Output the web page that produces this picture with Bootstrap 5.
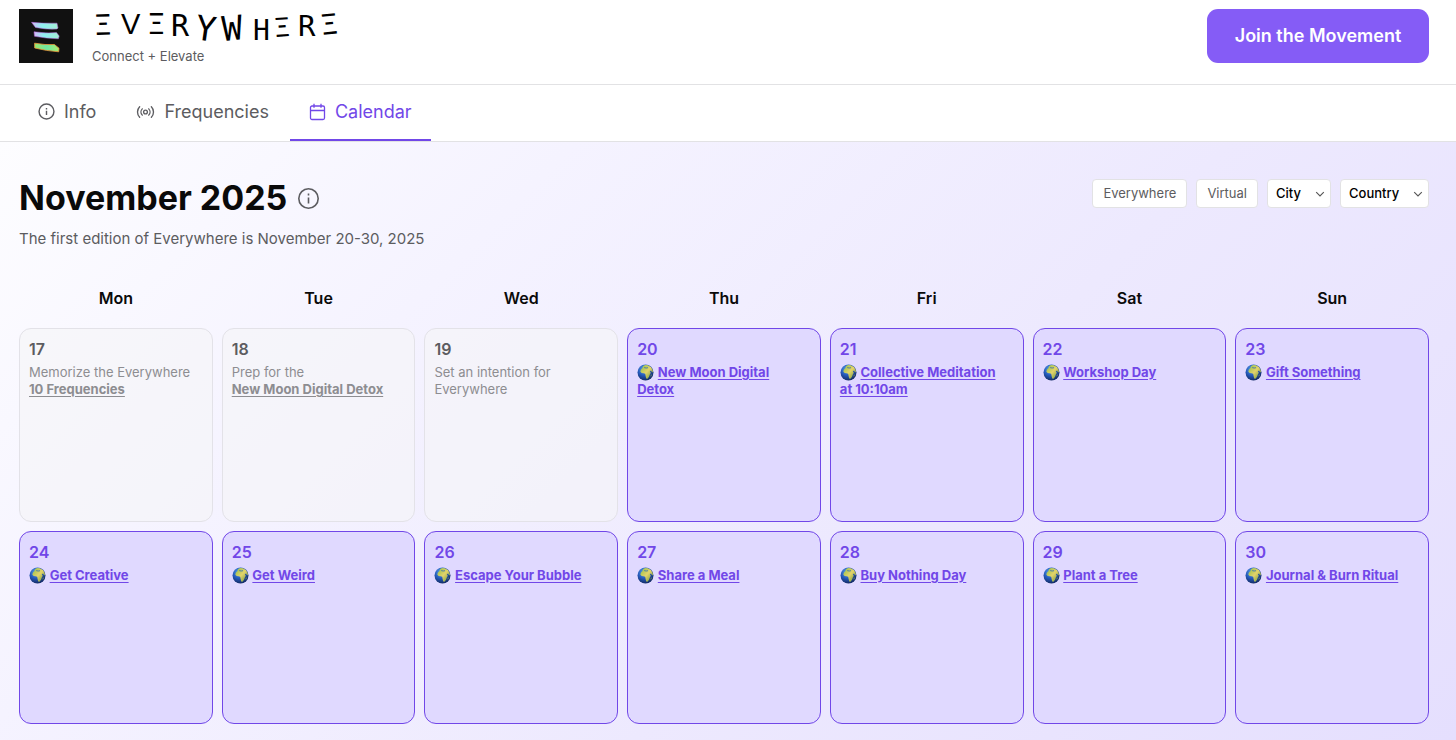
<!DOCTYPE html>
<html lang="en">
<head>
<meta charset="utf-8">
<meta name="viewport" content="width=device-width, initial-scale=1">
<title>Everywhere – Calendar</title>
<link href="https://cdn.jsdelivr.net/npm/bootstrap@5.3.0/dist/css/bootstrap.min.css" rel="stylesheet">
<style>
  :root { --brand: #7147e8; --ink: #0a0a0a; --muted: #5c5c60; --line: #e2e2e4; }
  body { font-family: Inter, "Liberation Sans", sans-serif; color: var(--ink); background: #fff; min-height: 100vh; }
  .gutter { padding-left: 19px; padding-right: 27px; }
  .top-bar { height: 85px; padding-top: 9px; border-bottom: 1px solid var(--line); }
  .brand { gap: 16px; }
  .wordmark { overflow: visible; }
  .tagline { font-size: 13px; line-height: 16px; color: var(--muted); margin: 0 0 0 3px; }
  .btn-join { width: 222px; height: 54px; padding: 4px 12px 6px; border: 0; border-radius: 11px; background: #855cf6; color: #fff; font-size: 18px; font-weight: 600; }
  .btn-join:hover { background: #7147e8; color: #fff; }
  .tab-bar { height: 57px; gap: 2px; border-bottom: 1px solid var(--line); }
  .tab-bar .nav-link { height: 56px; padding: 0 19px 1px; gap: 9px; color: var(--muted); font-size: 18px; border-radius: 0; border-bottom: 2px solid transparent; }
  .tab-bar .nav-link.active { color: var(--brand); border-bottom-color: var(--brand); }
  .page { background: linear-gradient(135deg, #fdfdff 0%, #f5f3ff 28%, #ede9fe 60%, #e5dffe 100%); min-height: calc(100vh - 142px); padding-top: 35px; padding-bottom: 16px; }
  h1 { font-size: 34px; line-height: 42px; font-weight: 700; margin: 0; }
  .month { gap: 10px; }
  .edition { font-size: 15px; line-height: 24px; color: var(--muted); margin: 8px 0 0; }
  .filters { gap: 9px; padding-top: 2px; }
  .pill { height: 29px; border: 1px solid var(--line); border-radius: 4px; background: #fff; font-size: 13px; line-height: 16px; color: var(--muted); padding: 0 10px 2px; }
  select.pill { appearance: none; color: #000; font-weight: 500; width: 100%; padding-left: 8px; }
  .pick { position: relative; }
  .pick svg { position: absolute; right: 6px; top: 10px; pointer-events: none; }
  .pick-city { width: 64px; }
  .pick-country { width: 89px; }
  .week-grid { display: grid; grid-template-columns: repeat(7, minmax(0, 1fr)); gap: 9px; }
  .weekdays { margin-top: 35px; margin-bottom: 18px; font-size: 16px; line-height: 24px; font-weight: 600; text-align: center; }
  .day { aspect-ratio: 1; border: 1px solid #7147e8; border-radius: 12px; background: #e0d9ff; padding: 9px 16px 9px 9px; font-size: 13px; line-height: 17px; color: var(--brand); overflow: hidden; }
  .day h2 { font-size: 16px; line-height: 22px; font-weight: 600; margin: 0 0 4px; }
  .day p { margin: 0; }
  .day a { color: inherit; font-weight: 700; text-underline-offset: 2px; }
  .day.past { background: #f5f5f799; border-color: #e3e2e8; color: #8d8d91; }
  .day.past h2 { color: #5c5c60; }
  .globe { width: 17px; height: 17px; vertical-align: -4px; }
</style>
</head>
<body>
<svg width="0" height="0" class="position-absolute" aria-hidden="true">
  <defs>
    <radialGradient id="sea" cx=".4" cy=".3" r=".7"><stop offset="0" stop-color="#5ba6ee"/><stop offset=".55" stop-color="#2458b8"/><stop offset="1" stop-color="#142c66"/></radialGradient>
    <linearGradient id="land" x1="0" y1="0" x2="1" y2="1"><stop offset="0" stop-color="#8fbf4a"/><stop offset=".5" stop-color="#e3d36a"/><stop offset="1" stop-color="#5f9138"/></linearGradient>
  </defs>
  <symbol id="globe" viewBox="0 0 17 17">
    <circle cx="8.5" cy="8.5" r="8" fill="url(#sea)"/>
    <path d="M6 2.2 8 1l3 .2 2.8 1.8 1.7 2.6.5 3-1.4-.8-.5-1.2-1.3.6 1 1.6-1 1.6-.8 2.3-1.5 2.1-1.3-.3-.6-2.6-.4-2.2-1.6-.4-2-.3L3.300 7.400l.7-2 1.300-1.100z" fill="url(#land)"/>
    <path d="m7.200 3.600 2 .4 1.800-.3" fill="none" stroke="#2d68b8" stroke-width=".8"/>
    <path d="m14 10.500.6.200-.4 1.600-.6.200z" fill="#a9b84e"/>
  </symbol>
  <symbol id="info" viewBox="0 0 24 24"><g fill="none" stroke="currentColor" stroke-width="2"><circle cx="12" cy="12" r="10.500"/><path d="M12 11v6M12 7v2"/></g></symbol>
  <symbol id="chev" viewBox="0 0 10 10"><path d="M1.200 3.200 5 7l3.800-3.800" fill="none" stroke="#555" stroke-width="1.100"/></symbol>
</svg>

<header class="top-bar gutter d-flex justify-content-between align-items-start">
  <div class="brand d-flex">
    <svg width="54" height="54" viewBox="0 0 54 54" role="img" aria-label="Everywhere logo">
      <defs>
        <linearGradient id="b1"><stop offset="0" stop-color="#d5b8f5"/><stop offset=".4" stop-color="#8ff0f2"/><stop offset="1" stop-color="#a4ecd4"/></linearGradient>
        <linearGradient id="b3"><stop offset="0" stop-color="#9be86e"/><stop offset=".5" stop-color="#6fe7a0"/><stop offset="1" stop-color="#a8ed70"/></linearGradient>
      </defs>
      <rect width="54" height="54" fill="#111"/>
      <path d="M12.500 13.300q12 1.200 25.500.9l1 4.800-1 1q-11 .6-21.500-1.500z" fill="url(#b1)" stroke="#bb62dd" stroke-width=".5"/>
      <path d="M15 22.800q12 1.800 22.500.8l2.700 3.400-.8 2.800q-12-.3-23.900-2.500z" fill="url(#b1)" stroke="#bb62dd" stroke-width=".5"/>
      <path d="M15.600 34.200q11 2 19.800 1.300l4.600 3.700-.3 3.600q-12-.8-24-3.800z" fill="url(#b3)" stroke="#ee9b3b" stroke-width=".8"/>
    </svg>
    <div>
      <svg width="264" height="39" viewBox="0 0 264 39" class="wordmark d-block" role="img" aria-label="Everywhere" font-family="DejaVu Sans Mono, monospace" font-size="28" fill="#000">
        <text x="6" y="26" rotate="-2">Ξ</text>
        <text x="32" y="25" font-size="29" font-family="Liberation Sans, sans-serif">V</text>
        <text x="59" y="25">Ξ</text>
        <text x="82" y="27" font-size="30">R</text>
        <text x="105" y="30" font-size="34" rotate="8">Y</text>
        <text x="134" y="32" font-size="34" rotate="-5">W</text>
        <text x="164" y="31">H</text>
        <text x="186" y="28" font-size="26" rotate="-4">Ξ</text>
        <text x="209" y="27" font-size="29">R</text>
        <text x="233" y="26" rotate="-6">Ξ</text>
      </svg>
      <p class="tagline">Connect + Elevate</p>
    </div>
  </div>
  <button type="button" class="btn btn-join">Join the Movement</button>
</header>

<nav class="tab-bar gutter nav flex-nowrap">
  <a class="nav-link d-flex align-items-center" href="#info-tab"><svg width="17" height="17"><use href="#info"/></svg>Info</a>
  <a class="nav-link d-flex align-items-center" href="#frequencies"><svg width="19" height="18" viewBox="0 0 24 24" fill="none" stroke="currentColor" stroke-width="1.800" stroke-linecap="round"><circle cx="12" cy="12" r="2.500"/><path d="M7.700 16.200a6 6 0 0 1 0-8.400M16.300 7.800a6 6 0 0 1 0 8.400M4.200 19a10 10 0 0 1 0-14M19.800 5a10 10 0 0 1 0 14"/></svg>Frequencies</a>
  <a class="nav-link active d-flex align-items-center" href="#calendar" aria-current="page"><svg width="17" height="18" viewBox="0 0 17 18" fill="none" stroke="currentColor" stroke-width="1.300"><rect x="1.500" y="3" width="14" height="13.500" rx="1.500"/><path d="M1.500 7.500h14M5 .8v4M12 .8v4"/></svg>Calendar</a>
</nav>

<main class="page gutter" id="calendar">
  <div class="d-flex justify-content-between align-items-start">
    <div>
      <div class="month d-flex align-items-center">
        <h1>November 2025</h1>
        <svg width="23" height="23" viewBox="0 0 23 23" fill="none" stroke="#5c5c60" stroke-width="1.600" role="img" aria-label="About"><circle cx="11.500" cy="11.500" r="9.700"/><path d="M11.500 10.500v6M11.500 6.500v2"/></svg>
      </div>
      <p class="edition">The first edition of Everywhere is November 20-30, 2025</p>
    </div>
    <div class="filters d-flex">
      <button type="button" class="pill">Everywhere</button>
      <button type="button" class="pill">Virtual</button>
      <div class="pick pick-city"><select class="pill" aria-label="City"><option>City</option></select><svg width="10" height="10"><use href="#chev"/></svg></div>
      <div class="pick pick-country"><select class="pill" aria-label="Country"><option>Country</option></select><svg width="10" height="10"><use href="#chev"/></svg></div>
    </div>
  </div>

  <div class="week-grid weekdays"><div>Mon</div><div>Tue</div><div>Wed</div><div>Thu</div><div>Fri</div><div>Sat</div><div>Sun</div></div>

  <div class="week-grid">
    <section class="day past"><h2>17</h2><p>Memorize the Everywhere<br><a href="#d17">10 Frequencies</a></p></section>
    <section class="day past"><h2>18</h2><p>Prep for the<br><a href="#d18">New Moon Digital Detox</a></p></section>
    <section class="day past"><h2>19</h2><p>Set an intention for Everywhere</p></section>
    <section class="day"><h2>20</h2><p><svg class="globe"><use href="#globe"/></svg> <a href="#d20">New Moon Digital Detox</a></p></section>
    <section class="day"><h2>21</h2><p><svg class="globe"><use href="#globe"/></svg> <a href="#d21">Collective Meditation at 10:10am</a></p></section>
    <section class="day"><h2>22</h2><p><svg class="globe"><use href="#globe"/></svg> <a href="#d22">Workshop Day</a></p></section>
    <section class="day"><h2>23</h2><p><svg class="globe"><use href="#globe"/></svg> <a href="#d23">Gift Something</a></p></section>
    <section class="day"><h2>24</h2><p><svg class="globe"><use href="#globe"/></svg> <a href="#d24">Get Creative</a></p></section>
    <section class="day"><h2>25</h2><p><svg class="globe"><use href="#globe"/></svg> <a href="#d25">Get Weird</a></p></section>
    <section class="day"><h2>26</h2><p><svg class="globe"><use href="#globe"/></svg> <a href="#d26">Escape Your Bubble</a></p></section>
    <section class="day"><h2>27</h2><p><svg class="globe"><use href="#globe"/></svg> <a href="#d27">Share a Meal</a></p></section>
    <section class="day"><h2>28</h2><p><svg class="globe"><use href="#globe"/></svg> <a href="#d28">Buy Nothing Day</a></p></section>
    <section class="day"><h2>29</h2><p><svg class="globe"><use href="#globe"/></svg> <a href="#d29">Plant a Tree</a></p></section>
    <section class="day"><h2>30</h2><p><svg class="globe"><use href="#globe"/></svg> <a href="#d30">Journal &amp; Burn Ritual</a></p></section>
  </div>
</main>
<script src="https://cdn.jsdelivr.net/npm/bootstrap@5.3.0/dist/js/bootstrap.bundle.min.js"></script>
</body>
</html>
